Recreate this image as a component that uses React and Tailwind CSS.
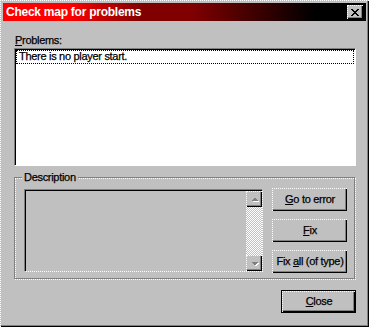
import React from 'react';

const font = "font-['Liberation_Sans',Arial,sans-serif]";

// raised 3D edge: dotted light top/left, black + dark gray bottom/right
const raised =
  'bg-[#c0c0c0] border-t border-l border-dotted border-white shadow-[inset_-1px_-1px_0_#000,inset_-2px_-2px_0_#808080]';

// sunken field edge
const sunken =
  'border [border-style:solid_dotted_dotted_solid] border-t-[#808080] border-l-[#808080] border-r-white border-b-white shadow-[inset_1px_1px_0_#000]';

function Button({ children, className = '' }) {
  return (
    <button className={`${raised} ${font} flex items-center justify-center text-[11px] leading-[13px] text-black tracking-[-0.3px] pb-[2px] [-webkit-text-stroke:0.25px_#000] ${className}`}>
      {children}
    </button>
  );
}

function CloseGlyph() {
  const px = [
    [0, 0], [1, 0], [6, 0], [7, 0],
    [1, 1], [2, 1], [5, 1], [6, 1],
    [2, 2], [3, 2], [4, 2], [5, 2],
    [3, 3], [4, 3],
    [2, 4], [3, 4], [4, 4], [5, 4],
    [1, 5], [2, 5], [5, 5], [6, 5],
    [0, 6], [1, 6], [6, 6], [7, 6],
  ];
  return (
    <svg width="8" height="7" viewBox="0 0 8 7" shapeRendering="crispEdges">
      {px.map(([x, y]) => (
        <rect key={`${x}-${y}`} x={x} y={y} width="1" height="1" fill="#000" />
      ))}
    </svg>
  );
}

function Arrow({ down }) {
  return (
    <svg width="9" height="6" viewBox="0 0 9 6" shapeRendering="crispEdges">
      {down ? (
        <>
          <polygon points="2,2 9,2 5.5,5.5" fill="#fff" />
          <polygon points="1,1 8,1 4.5,4.5" fill="#808080" />
        </>
      ) : (
        <>
          <polygon points="5.5,1.5 9,5 2,5" fill="#fff" />
          <polygon points="4.5,0.5 8,4 1,4" fill="#808080" />
        </>
      )}
    </svg>
  );
}

function ScrollButton({ down }) {
  return (
    <div className={`${raised} w-[16px] h-[16px] flex items-center justify-center`}>
      <Arrow down={down} />
    </div>
  );
}

export default function App() {
  return (
    <div className={`${font} w-[369px] h-[327px] bg-[#c0c0c0] border-t border-l border-dotted border-white shadow-[inset_-1px_-1px_0_#000,inset_-2px_-2px_0_#808080] pt-[2px] pl-[2px] pr-[3px] text-[11px] leading-[13px] text-black flex flex-col`}>
      {/* Title bar */}
      <div className="h-[18px] flex items-center justify-between pl-[3px] pr-[3px] bg-[linear-gradient(to_right,#ff0000_0%,#ff0000_18%,#800000_38%,#800000_52%,#000000_86%)]">
        <span className="text-white font-bold text-[12px] leading-[14px] tracking-[-0.25px]">Check map for problems</span>
        <div className={`${raised} w-[16px] h-[14px] flex items-center justify-center pr-px pb-px`}>
          <CloseGlyph />
        </div>
      </div>

      {/* Body */}
      <div className="pl-[11px] pr-[10px] flex flex-col [-webkit-text-stroke:0.25px_#000]">
        <div className="mt-[13px] h-[13px] pl-px tracking-[-0.3px]">
          <u>P</u>roblems:
        </div>

        <div className={`${sunken} mt-px h-[118px] bg-white pt-px pl-px`}>
          <div className="h-[14px] mr-px border border-dotted border-black pl-[2px] leading-[11px] tracking-[-0.3px]">
            There is no player start.
          </div>
        </div>

        {/* Description group */}
        <div className="relative mt-[11px] h-[102px] w-[341px] border border-[#808080]">
          <div className="w-[341px] h-[102px] border border-dotted border-white pl-[8px] pt-[9px] flex">
            <div className={`${sunken} mt-px w-[239px] h-[83px] bg-[#c0c0c0] pt-px flex justify-end`}>
              <div className="w-[16px] h-[80px] flex flex-col">
                <ScrollButton />
                <div className="flex-1 bg-[repeating-conic-gradient(#ffffff_0_25%,#c0c0c0_0_50%)] bg-[length:2px_2px]" />
                <ScrollButton down />
              </div>
            </div>
            <div className="ml-[9px] flex flex-col gap-[8px]">
              <Button className="w-[75px] h-[23px]">
                <span><u>G</u>o to error</span>
              </Button>
              <Button className="w-[75px] h-[23px]">
                <span><u>F</u>ix</span>
              </Button>
              <Button className="w-[75px] h-[23px]">
                <span>Fix <u>a</u>ll (of type)</span>
              </Button>
            </div>
          </div>
          <span className="absolute left-[7px] -top-[7px] px-[2px] bg-[#c0c0c0] tracking-[-0.3px]">
            Description
          </span>
        </div>

        <div className="mt-[11px] flex justify-end">
          <div className="w-[75px] h-[23px] border border-black">
            <Button className="w-full h-full">
              <span><u>C</u>lose</span>
            </Button>
          </div>
        </div>
      </div>
    </div>
  );
}
